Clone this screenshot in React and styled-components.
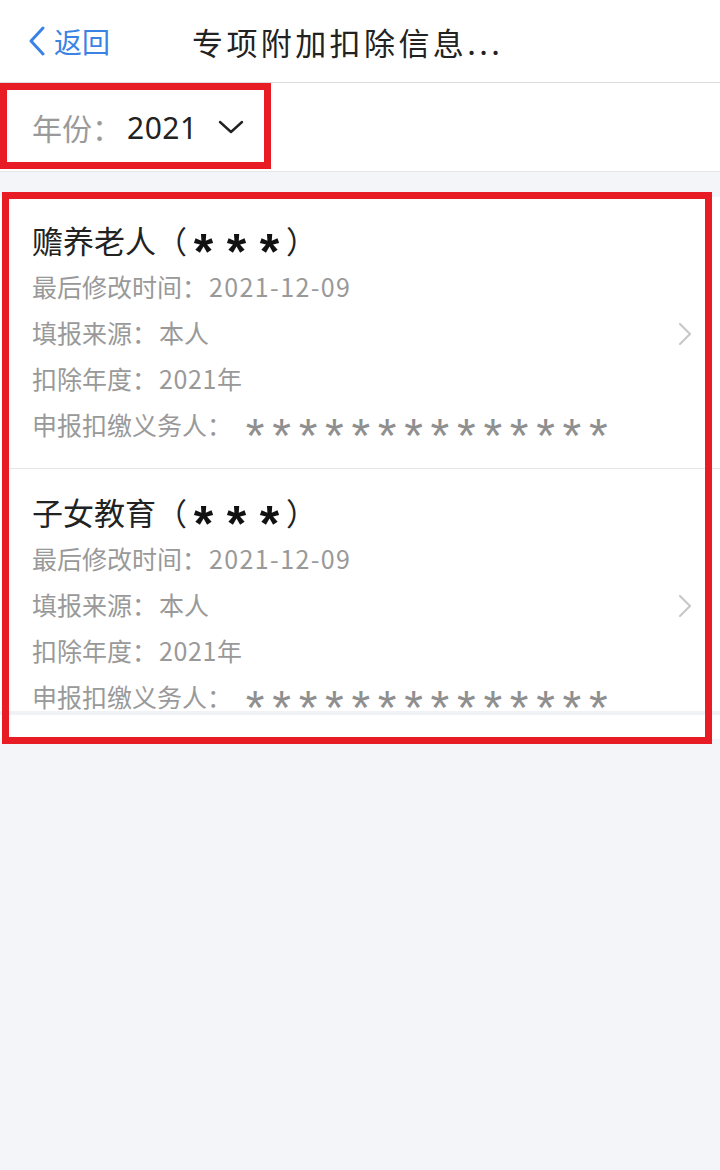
import React from 'react'
import styled, { createGlobalStyle } from 'styled-components'

const GlobalStyle = createGlobalStyle`
  html, body {
    margin: 0;
    padding: 0;
    background: #f4f5f9;
    font-family: "Noto Sans CJK SC", "Noto Sans", sans-serif;
  }
`

const Page = styled.div`
  position: relative;
  width: 720px;
  height: 1170px;
  background: #f4f5f9;
  overflow: hidden;
`

const Header = styled.header`
  height: 82px;
  background: #fff;
  border-bottom: 1px solid #dcdcdc;
  display: flex;
  align-items: center;
  padding-left: 28px;
`

const Back = styled.button`
  display: flex;
  align-items: center;
  gap: 8px;
  border: 0;
  background: none;
  padding: 0;
  color: #3a82e4;
  font-family: inherit;
  font-size: 28px;
  cursor: pointer;

  svg {
    stroke: #3a82e4;
  }
`

const Title = styled.h1`
  margin: 0 0 0 82px;
  font-size: 31px;
  font-weight: 400;
  letter-spacing: 3.4px;
  color: #222;
`

const YearBar = styled.div`
  height: 88px;
  background: #fff;
  border-bottom: 1px solid #e6e6e6;
  display: flex;
  align-items: center;
  padding-left: 32px;
`

const YearLabel = styled.span`
  font-size: 30px;
  color: #9a9a9a;
`

const YearValue = styled.span`
  margin-left: 5px;
  font-family: "Noto Sans", sans-serif;
  font-size: 30px;
  letter-spacing: 0.5px;
  color: #222;
`

const Caret = styled.svg`
  margin-left: 20px;
  stroke: #222;
`

const List = styled.section`
  margin-top: 25px;
  background: #fff;
`

const Scroll = styled.div`
  height: 514px;
  overflow: hidden;
`

const Card = styled.div`
  position: relative;
  padding: 20px 32px 21px 22px;
  margin-left: 10px;
  border-bottom: 1px solid #e6e6e6;
`

const CardTitle = styled.div`
  font-size: 31px;
  line-height: 46px;
  color: #222;
  white-space: nowrap;
`

const Star = styled.span`
  display: inline-block;
  width: ${p => p.$w}px;
  text-align: center;
  font-family: "Liberation Sans", Arial, sans-serif;
  font-size: ${p => p.$size}px;
  font-weight: ${p => (p.$bold ? 700 : 400)};
  line-height: 0;
  vertical-align: ${p => p.$shift}px;
  color: ${p => p.$color};
`

const Line = styled.div`
  font-size: 25px;
  line-height: 46px;
  color: #999;
  white-space: nowrap;
`

const Value = styled.span`
  margin-left: ${p => p.$gap || 2}px;
  letter-spacing: ${p => p.$spacing || 0}px;
`

const Arrow = styled.svg`
  position: absolute;
  right: 28px;
  top: 50%;
  margin-top: -11px;
  stroke: #c8c8c8;
`

const Footer = styled.div`
  height: 24px;
  border-top: 4px solid #f1f2f5;
`

const Mark = styled.div`
  position: absolute;
  left: ${p => p.$x}px;
  top: ${p => p.$y}px;
  width: ${p => p.$w}px;
  height: ${p => p.$h}px;
  border: 7px solid #e81c24;
  box-sizing: border-box;
  pointer-events: none;
`

const items = [
  { name: '赡养老人', date: '2021-12-09', source: '本人', year: '2021年' },
  { name: '子女教育', date: '2021-12-09', source: '本人', year: '2021年' },
]

const stars = n => Array.from({ length: n }, (_, i) => i)

export default function App() {
  return (
    <Page>
      <GlobalStyle />
      <Header>
        <Back>
          <svg width="18" height="30" viewBox="0 0 18 30" fill="none" strokeWidth="3" strokeLinecap="round" strokeLinejoin="round">
            <path d="M15 2 L3 15 L15 28" />
          </svg>
          返回
        </Back>
        <Title>专项附加扣除信息...</Title>
      </Header>
      <YearBar>
        <YearLabel>年份：</YearLabel>
        <YearValue>2021</YearValue>
        <Caret width="26" height="16" viewBox="0 0 26 16" fill="none" strokeWidth="2.4" strokeLinecap="round" strokeLinejoin="round">
          <path d="M2 3 L13 13 L24 3" />
        </Caret>
      </YearBar>
      <List>
        <Scroll>
          {items.map(item => (
            <Card key={item.name}>
              <CardTitle>
                {item.name}（
                {stars(3).map(i => (
                  <Star key={i} $w={33} $size={50} $bold $shift={-16} $color="#111">*</Star>
                ))}
                ）
              </CardTitle>
              <Line>最后修改时间：<Value $gap={2} $spacing={1.4}>{item.date}</Value></Line>
              <Line>填报来源：<Value>{item.source}</Value></Line>
              <Line>扣除年度：<Value $spacing={0.6}>{item.year}</Value></Line>
              <Line>
                申报扣缴义务人：
                <Value $gap={10}>
                  {stars(14).map(i => (
                    <Star key={i} $w={26.4} $size={48} $shift={-17} $color="#8f8f8f">*</Star>
                  ))}
                </Value>
              </Line>
              <Arrow width="14" height="24" viewBox="0 0 14 24" fill="none" strokeWidth="2.2" strokeLinecap="round" strokeLinejoin="round">
                <path d="M2 2 L12 12 L2 22" />
              </Arrow>
            </Card>
          ))}
        </Scroll>
        <Footer />
      </List>
      <Mark $x={0} $y={83} $w={271} $h={86} />
      <Mark $x={2} $y={192} $w={710} $h={552} />
    </Page>
  )
}
